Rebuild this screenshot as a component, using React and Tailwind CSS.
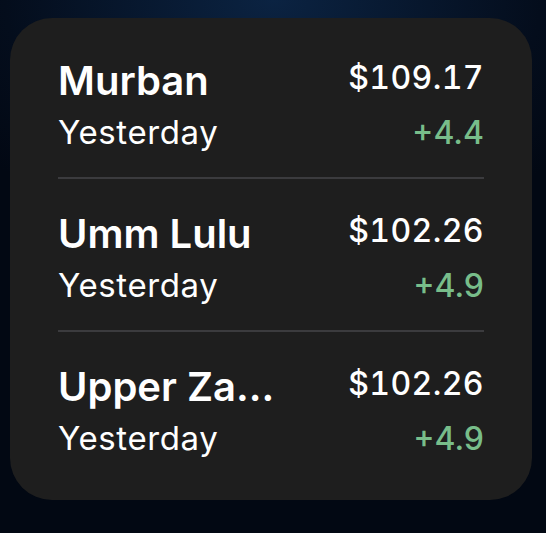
const rows = [
  { name: "Murban", price: "$109.17", change: "+4.4" },
  { name: "Umm Lulu", price: "$102.26", change: "+4.9" },
  { name: "Upper Za…", price: "$102.26", change: "+4.9" },
];

const App = () => {
  return (
    <div className="w-[546px] h-[533px] pt-[18px] px-[10px] bg-[radial-gradient(ellipse_70%_45%_at_50%_0%,#0b2342,#040d1c_70%,#020813)] font-['Inter',sans-serif]">
      <div className="w-[522px] h-[482px] rounded-[42px] bg-[#1e1e1e] pt-[41px] pl-[48px] pr-[48px] pb-[43px]">
        {rows.map((row, i) => (
          <div key={row.name}>
            {i > 0 && <div className="h-[2px] bg-[#3b3b3e]" />}
            <div className={i > 0 ? "pt-[33px]" : ""}>
              <div className="flex h-[44px] items-start justify-between">
                <span className="text-[40px] leading-[44px] font-semibold text-white whitespace-nowrap">
                  {row.name}
                </span>
                <span className="mt-[1px] text-[32px] leading-[36px] font-medium tabular-nums tracking-[0.4px] text-white">
                  {row.price}
                </span>
              </div>
              <div className="mt-[10px] flex h-[38px] items-baseline justify-between">
                <span className="text-[33px] leading-[38px] tracking-[0.6px] text-white">Yesterday</span>
                <span className="text-[32px] leading-[38px] font-medium text-[#78bd8a]">
                  {row.change}
                </span>
              </div>
              {i < rows.length - 1 && <div className="h-[26px]" />}
            </div>
          </div>
        ))}
      </div>
    </div>
  );
};

export default App;
